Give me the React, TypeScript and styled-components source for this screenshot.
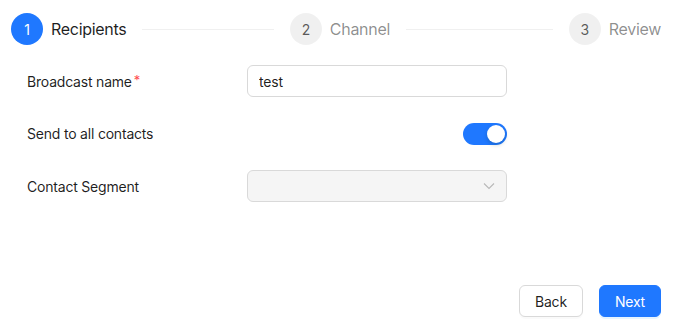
import * as React from 'react'
import styled, { createGlobalStyle } from 'styled-components'

const GlobalStyle = createGlobalStyle`
  html, body {
    margin: 0;
    padding: 0;
    background: #ffffff;
  }
  body {
    font-family: Inter, "Noto Sans", "Liberation Sans", sans-serif;
    color: rgba(0, 0, 0, 0.88);
    letter-spacing: -0.2px;
    -webkit-font-smoothing: antialiased;
  }
`

const Page = styled.div`
  height: 100vh;
  box-sizing: border-box;
  display: flex;
  flex-direction: column;
  padding: 13px 15px 12px 11px;
`

const StepsBar = styled.div`
  display: flex;
  align-items: center;
`

const Step = styled.div<{ $last?: boolean }>`
  display: flex;
  align-items: center;
  flex: ${p => (p.$last ? '0 0 auto' : '1 1 0')};
  margin-right: ${p => (p.$last ? '0' : '16px')};
`

const StepIcon = styled.div<{ $active?: boolean }>`
  width: 32px;
  height: 32px;
  flex: none;
  border-radius: 50%;
  display: flex;
  align-items: center;
  justify-content: center;
  font-size: 14px;
  background: ${p => (p.$active ? '#1f78ff' : 'rgba(0, 0, 0, 0.06)')};
  color: ${p => (p.$active ? '#ffffff' : 'rgba(0, 0, 0, 0.65)')};
  margin-right: 8px;
`

const StepTitle = styled.div<{ $active?: boolean }>`
  font-size: 16px;
  line-height: 32px;
  letter-spacing: -0.3px;
  white-space: nowrap;
  color: ${p => (p.$active ? 'rgba(0, 0, 0, 0.88)' : 'rgba(0, 0, 0, 0.45)')};
`

const StepLine = styled.div`
  flex: 1;
  height: 1px;
  background: rgba(5, 5, 5, 0.06);
  margin-left: 16px;
`

const Form = styled.div`
  display: flex;
  flex-direction: column;
  gap: 20px;
  margin-top: 20px;
  padding-left: 16px;
`

const Row = styled.div<{ $h?: number }>`
  display: flex;
  align-items: center;
  height: ${p => p.$h ?? 32}px;
`

const Label = styled.div`
  width: 220px;
  font-size: 14px;
  color: rgba(0, 0, 0, 0.88);
`

const Required = styled.span`
  color: #ff4d4f;
  margin-left: 2px;
  font-size: 13px;
  position: relative;
  top: -2px;
`

const Control = styled.div`
  width: 260px;
  display: flex;
  justify-content: flex-end;
`

const TextInput = styled.input`
  width: 100%;
  height: 32px;
  box-sizing: border-box;
  border: 1px solid #d9d9d9;
  border-radius: 6px;
  padding: 4px 11px;
  font-family: inherit;
  font-size: 14px;
  letter-spacing: inherit;
  color: rgba(0, 0, 0, 0.88);
  outline: none;
`

const Switch = styled.button<{ $on?: boolean }>`
  position: relative;
  width: 44px;
  height: 22px;
  border: none;
  padding: 0;
  border-radius: 11px;
  background: ${p => (p.$on ? '#1f78ff' : 'rgba(0, 0, 0, 0.25)')};
  cursor: pointer;
`

const Knob = styled.span<{ $on?: boolean }>`
  position: absolute;
  top: 2px;
  left: ${p => (p.$on ? '24px' : '2px')};
  width: 18px;
  height: 18px;
  border-radius: 50%;
  background: #ffffff;
  box-shadow: 0 2px 4px rgba(0, 35, 11, 0.2);
`

const SelectBox = styled.div`
  width: 100%;
  height: 32px;
  box-sizing: border-box;
  border: 1px solid #d9d9d9;
  border-radius: 6px;
  background: rgba(0, 0, 0, 0.04);
  display: flex;
  align-items: center;
  justify-content: flex-end;
  padding: 0 11px;
  color: rgba(0, 0, 0, 0.25);
  cursor: not-allowed;
`

const Footer = styled.div`
  margin-top: auto;
  display: flex;
  justify-content: flex-end;
  gap: 16px;
`

const Button = styled.button<{ $primary?: boolean }>`
  height: 32px;
  padding: 4px 15px;
  border-radius: 6px;
  font-family: inherit;
  font-size: 14px;
  letter-spacing: inherit;
  border: 1px solid ${p => (p.$primary ? '#1f78ff' : '#d9d9d9')};
  background: ${p => (p.$primary ? '#1f78ff' : '#ffffff')};
  color: ${p => (p.$primary ? '#ffffff' : 'rgba(0, 0, 0, 0.88)')};
  box-shadow: ${p => (p.$primary ? '0 2px 0 rgba(5, 145, 255, 0.1)' : '0 2px 0 rgba(0, 0, 0, 0.02)')};
  cursor: pointer;
`

const steps = ['Recipients', 'Channel', 'Review']

export default function App() {
  const [name, setName] = React.useState('test')
  const [all, setAll] = React.useState(true)

  return (
    <Page>
      <GlobalStyle />
      <StepsBar>
        {steps.map((s, i) => {
          const last = i === steps.length - 1
          return (
            <Step key={s} $last={last}>
              <StepIcon $active={i === 0}>{i + 1}</StepIcon>
              <StepTitle $active={i === 0}>{s}</StepTitle>
              {!last && <StepLine />}
            </Step>
          )
        })}
      </StepsBar>
      <Form>
        <Row>
          <Label>
            Broadcast name<Required>*</Required>
          </Label>
          <Control>
            <TextInput value={name} onChange={e => setName(e.target.value)} />
          </Control>
        </Row>
        <Row $h={33}>
          <Label>Send to all contacts</Label>
          <Control>
            <Switch $on={all} onClick={() => setAll(!all)}>
              <Knob $on={all} />
            </Switch>
          </Control>
        </Row>
        <Row>
          <Label>Contact Segment</Label>
          <Control>
            <SelectBox>
              <svg width="12" height="12" viewBox="0 0 12 12" fill="none">
                <path d="M1 3.5 L6 8.5 L11 3.5" stroke="currentColor" strokeWidth="1.1" />
              </svg>
            </SelectBox>
          </Control>
        </Row>
      </Form>
      <Footer>
        <Button>Back</Button>
        <Button $primary>Next</Button>
      </Footer>
    </Page>
  )
}
